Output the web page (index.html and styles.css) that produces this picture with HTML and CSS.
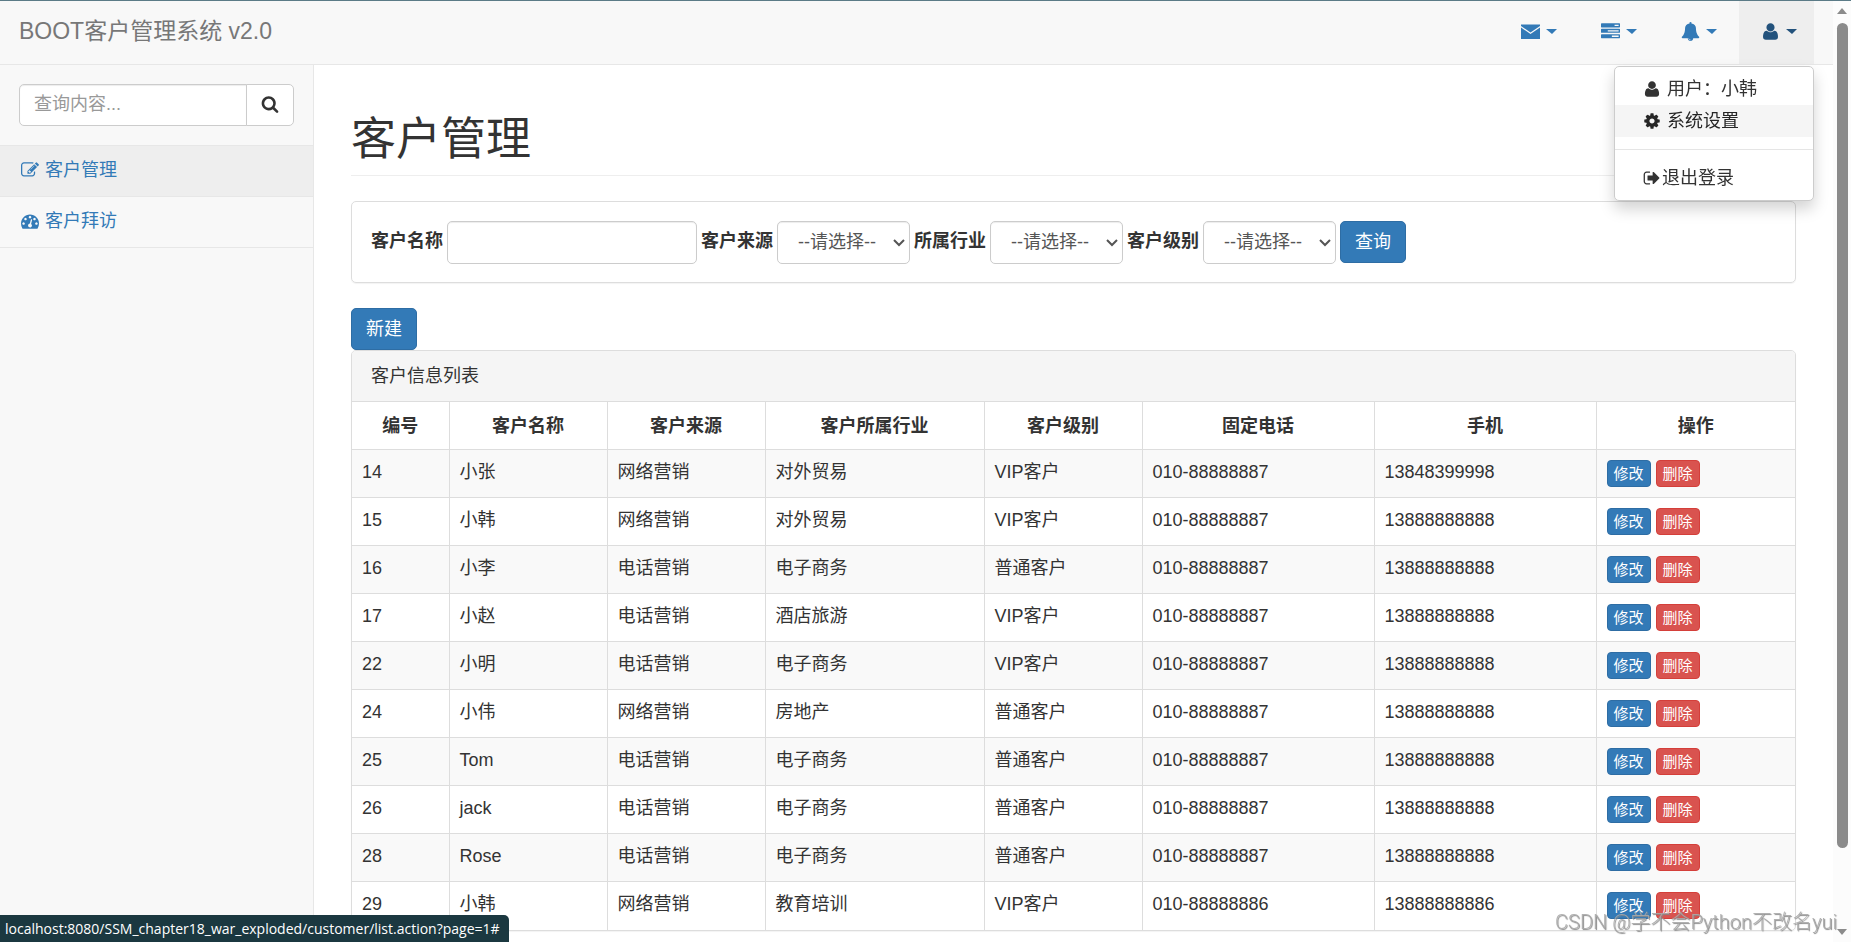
FILE: index.html
```
<!DOCTYPE html>
<html lang="zh-CN">
  <head>
    <title>客户管理-BootCRM</title>
    <meta charset="UTF-8">
    <meta name="viewport" content="width=device-width, initial-scale=1.0">
    <link rel="stylesheet" href="styles.css">
  </head>
  <body>
    <!-- icon sprites -->
    <svg class="sprites" aria-hidden="true">
      <symbol id="i-envelope" viewBox="0 0 19 16"><path d="M0 1h19v1.500L9.500 9 0 2.500zM0 4l9.500 6.500L19 4v11.500H0z"/></symbol>
      <symbol id="i-tasks" viewBox="0 0 1792 1792"><path d="M1024 1408h640v-128h-640v128zm-384-512h1024v-128h-1024v128zm640-512h384v-128h-384v128zm512 832v256q0 26-19 45t-45 19h-1664q-26 0-45-19t-19-45v-256q0-26 19-45t45-19h1664q26 0 45 19t19 45zm0-512v256q0 26-19 45t-45 19h-1664q-26 0-45-19t-19-45v-256q0-26 19-45t45-19h1664q26 0 45 19t19 45zm0-512v256q0 26-19 45t-45 19h-1664q-26 0-45-19t-19-45v-256q0-26 19-45t45-19h1664q26 0 45 19t19 45z"/></symbol>
      <symbol id="i-bell" viewBox="0 0 1792 1792"><path d="M912 1696q0-16-16-16-59 0-101.500-42.500t-42.500-101.500q0-16-16-16t-16 16q0 73 51.500 124.500t124.500 51.500q16 0 16-16zm816-288q0 52-38 90t-90 38h-448q0 106-75 181t-181 75-181-75-75-181h-448q-52 0-90-38t-38-90q50-42 91-88t85-119.500 74.500-158.500 50-206 19.500-260q0-152 117-282.500t307-158.500q-8-19-8-39 0-40 28-68t68-28 68 28 28 68q0 20-8 39 190 28 307 158.500t117 282.500q0 139 19.500 260t50 206 74.500 158.500 85 119.500 91 88z"/></symbol>
      <symbol id="i-user" viewBox="0 0 1792 1792"><path d="M1600 1405q0 120-73 189.500t-194 69.500h-874q-121 0-194-69.500t-73-189.500q0-53 3.500-103.500t14-109 26.500-108.500 43-97.500 62-81 85.500-53.500 111.500-20q9 0 42 21.500t74.500 48 108 48 133.500 21.500 133.500-21.500 108-48 74.500-48 42-21.500q61 0 111.500 20t85.500 53.500 62 81 43 97.500 26.500 108.500 14 109 3.500 103.500zm-320-893q0 159-112.500 271.500t-271.500 112.500-271.500-112.500-112.500-271.500 112.500-271.500 271.500-112.500 271.500 112.500 112.500 271.500z"/></symbol>
      <symbol id="i-gear" viewBox="0 0 1792 1792"><path d="M1152 896q0-106-75-181t-181-75-181 75-75 181 75 181 181 75 181-75 75-181zm512-109v222q0 12-8 23t-20 13l-185 28q-19 54-39 91 35 50 107 138 10 12 10 25t-9 23q-27 37-99 108t-94 71q-12 0-26-9l-138-108q-44 23-91 38-16 136-29 186-7 28-36 28h-222q-14 0-24.500-8.500t-11.500-21.500l-28-184q-49-16-90-37l-141 107q-10 9-25 9-14 0-25-11-126-114-165-168-7-10-7-23 0-12 8-23 15-21 51-66.500t54-70.500q-27-50-41-99l-183-27q-13-2-21-12.500t-8-23.500v-222q0-12 8-23t19-13l186-28q14-46 39-92-40-57-107-138-10-12-10-24 0-10 9-23 26-36 98.500-107.500t94.500-71.500q13 0 26 10l138 107q44-23 91-38 16-136 29-186 7-28 36-28h222q14 0 24.500 8.500t11.500 21.500l28 184q49 16 90 37l142-107q9-9 24-9 13 0 25 10 129 119 165 170 7 8 7 22 0 12-8 23-15 21-51 66.500t-54 70.500q26 50 41 98l183 28q13 2 21 12.500t8 23.500z"/></symbol>
      <symbol id="i-signout" viewBox="0 0 1792 1792"><path d="M704 1440q0 4 1 20t.5 26.500-3 23.500-10 19.500-20.500 6.500h-320q-119 0-203.500-84.500t-84.500-203.500v-704q0-119 84.500-203.500t203.500-84.500h320q13 0 22.500 9.500t9.500 22.500q0 4 1 20t.5 26.500-3 23.500-10 19.500-20.500 6.500h-320q-66 0-113 47t-47 113v704q0 66 47 113t113 47h312l11.500 1 11.500 3 8 5.500 7 9 2 13.500zm928-544q0 26-19 45l-544 544q-19 19-45 19t-45-19-19-45v-288h-448q-26 0-45-19t-19-45v-384q0-26 19-45t45-19h448v-288q0-26 19-45t45-19 45 19l544 544q19 19 19 45z"/></symbol>
      <symbol id="i-search" viewBox="0 0 1792 1792"><path d="M1216 832q0-185-131.500-316.500t-316.500-131.500-316.500 131.500-131.500 316.500 131.500 316.500 316.500 131.500 316.500-131.500 131.500-316.500zm512 832q0 52-38 90t-90 38q-54 0-90-38l-343-342q-179 124-399 124-143 0-273.500-55.500t-225-150-150-225-55.500-273.500 55.500-273.500 150-225 225-150 273.500-55.500 273.500 55.500 225 150 150 225 55.500 273.500q0 220-124 399l343 343q37 37 37 90z"/></symbol>
      <symbol id="i-edit" viewBox="0 0 1792 1792"><path d="M888 1184l116-116-152-152-116 116v56h96v96h56zm440-720q-16-16-33 1l-350 350q-17 17-1 33t33-1l350-350q17-17 1-33zm80 594v190q0 119-84.500 203.500t-203.500 84.500h-832q-119 0-203.500-84.500t-84.500-203.500v-832q0-119 84.500-203.500t203.500-84.500h832q63 0 117 25 15 7 18 23 3 17-9 29l-49 49q-14 14-32 8-23-6-45-6h-832q-66 0-113 47t-47 113v832q0 66 47 113t113 47h832q66 0 113-47t47-113v-126q0-13 9-22l64-64q15-15 35-7t20 29zm-96-738l288 288-672 672h-288v-288zm444 132l-92 92-288-288 92-92q28-28 68-28t68 28l152 152q28 28 28 68t-28 68z"/></symbol>
      <symbol id="i-dashboard" viewBox="0 0 1792 1792"><path d="M384 1152q0-53-37.500-90.500t-90.500-37.500-90.500 37.500-37.500 90.500 37.500 90.500 90.500 37.500 90.500-37.500 37.500-90.500zm192-448q0-53-37.500-90.500t-90.500-37.500-90.500 37.500-37.500 90.500 37.500 90.500 90.500 37.500 90.500-37.500 37.500-90.500zm428 481l101-382q6-26-7.500-48.500t-38.500-29.500-48 6.500-30 39.500l-101 382q-60 5-107 43.500t-63 98.500q-20 77 20 146t117 89 146-20 89-117q16-60-6-117t-72-91zm660-33q0-53-37.500-90.500t-90.500-37.500-90.500 37.500-37.500 90.500 37.500 90.500 90.500 37.500 90.500-37.500 37.500-90.500zm-640-640q0-53-37.500-90.500t-90.500-37.500-90.500 37.500-37.500 90.500 37.500 90.500 90.500 37.500 90.500-37.500 37.500-90.500zm448 192q0-53-37.500-90.500t-90.500-37.500-90.500 37.500-37.500 90.500 37.500 90.500 90.500 37.500 90.500-37.500 37.500-90.500zm320 448q0 261-141 483-19 29-54 29h-1402q-35 0-54-29-141-221-141-483 0-182 71-348t191-286 286-191 348-71 348 71 286 191 191 286 71 348z"/></symbol>
      <symbol id="i-chevron" viewBox="0 0 12 8"><path d="M1 1l5 5 5-5" fill="none" stroke="currentColor" stroke-width="2"/></symbol>
    </svg>

    <div class="wrapper">
      <!-- top nav -->
      <nav class="navbar">
        <a class="navbar-brand" href="#">BOOT客户管理系统 v2.0</a>
        <ul class="top-links">
          <li><a href="#" aria-label="邮件"><svg class="icon"><use href="#i-envelope"/></svg><i class="caret"></i></a></li>
          <li><a href="#" aria-label="任务"><svg class="icon"><use href="#i-tasks"/></svg><i class="caret"></i></a></li>
          <li><a href="#" aria-label="消息"><svg class="icon"><use href="#i-bell"/></svg><i class="caret"></i></a></li>
          <li class="open">
            <a href="#" aria-label="用户"><svg class="icon"><use href="#i-user"/></svg><i class="caret"></i></a>
            <ul class="dropdown-menu">
              <li><a href="#"><svg class="icon"><use href="#i-user"/></svg> 用户：小韩</a></li>
              <li><a class="hover" href="#"><svg class="icon"><use href="#i-gear"/></svg> 系统设置</a></li>
              <li class="divider"></li>
              <li><a class="tight" href="#"><svg class="icon"><use href="#i-signout"/></svg>退出登录</a></li>
            </ul>
          </li>
        </ul>
      </nav>

      <div class="content">
        <aside class="sidebar">
          <div class="sidebar-search">
            <input type="text" placeholder="查询内容..." aria-label="查询内容">
            <button type="button" aria-label="搜索"><svg class="icon"><use href="#i-search"/></svg></button>
          </div>
          <ul class="side-menu">
            <li><a class="active" href="#"><svg class="icon"><use href="#i-edit"/></svg>客户管理</a></li>
            <li><a href="#"><svg class="icon"><use href="#i-dashboard"/></svg>客户拜访</a></li>
          </ul>
        </aside>

        <main class="page">
          <h1 class="page-header">客户管理</h1>

          <form class="panel search-form">
            <label for="customerName">客户名称</label>
            <input type="text" id="customerName" name="custName">
            <label for="customerFrom">客户来源</label>
            <span class="select">
              <select id="customerFrom" name="custSource"><option>--请选择--</option></select>
              <svg><use href="#i-chevron"/></svg>
            </span>
            <label for="custIndustry">所属行业</label>
            <span class="select">
              <select id="custIndustry" name="custIndustry"><option>--请选择--</option></select>
              <svg><use href="#i-chevron"/></svg>
            </span>
            <label for="custLevel">客户级别</label>
            <span class="select">
              <select id="custLevel" name="custLevel"><option>--请选择--</option></select>
              <svg><use href="#i-chevron"/></svg>
            </span>
            <button type="button" class="btn btn-primary">查询</button>
          </form>

          <button type="button" class="btn btn-primary">新建</button>

          <div class="panel">
            <div class="panel-heading">客户信息列表</div>
            <table>
              <colgroup>
                <col class="col-id">
                <col class="col-name">
                <col class="col-name">
                <col class="col-industry">
                <col class="col-name">
                <col class="col-phone">
                <col class="col-mobile">
                <col>
              </colgroup>
              <thead>
                <tr>
                  <th>编号</th>
                  <th>客户名称</th>
                  <th>客户来源</th>
                  <th>客户所属行业</th>
                  <th>客户级别</th>
                  <th>固定电话</th>
                  <th>手机</th>
                  <th>操作</th>
                </tr>
              </thead>
              <tbody id="customer-rows"></tbody>
            </table>
          </div>
        </main>
      </div>
    </div>

    <div class="scrollbar" aria-hidden="true">
      <i class="arrow-up"></i>
      <i class="thumb"></i>
      <i class="arrow-down"></i>
    </div>
    <div class="status-bar">localhost:8080/SSM_chapter18_war_exploded/customer/list.action?page=1#</div>
    <div class="watermark">CSDN @学不会Python不改名yui</div>

    <script>
      const customers = [
        ["14", "小张", "网络营销", "对外贸易", "VIP客户", "010-88888887", "13848399998"],
        ["15", "小韩", "网络营销", "对外贸易", "VIP客户", "010-88888887", "13888888888"],
        ["16", "小李", "电话营销", "电子商务", "普通客户", "010-88888887", "13888888888"],
        ["17", "小赵", "电话营销", "酒店旅游", "VIP客户", "010-88888887", "13888888888"],
        ["22", "小明", "电话营销", "电子商务", "VIP客户", "010-88888887", "13888888888"],
        ["24", "小伟", "网络营销", "房地产", "普通客户", "010-88888887", "13888888888"],
        ["25", "Tom", "电话营销", "电子商务", "普通客户", "010-88888887", "13888888888"],
        ["26", "jack", "电话营销", "电子商务", "普通客户", "010-88888887", "13888888888"],
        ["28", "Rose", "电话营销", "电子商务", "普通客户", "010-88888887", "13888888888"],
        ["29", "小韩", "网络营销", "教育培训", "VIP客户", "010-88888886", "13888888886"]
      ];

      // Fill the customer table, one row each plus the edit / delete buttons
      const rows = document.getElementById("customer-rows");
      customers.forEach((customer) => {
        const row = rows.insertRow();
        customer.forEach((value) => {
          row.insertCell().textContent = value;
        });
        const actions = row.insertCell();
        actions.className = "actions";
        actions.innerHTML =
          '<div><button type="button" class="btn btn-primary btn-xs">修改</button>' +
          '<button type="button" class="btn btn-danger btn-xs">删除</button></div>';
      });
    </script>
  </body>
</html>
```
FILE: styles.css
```
* {
  box-sizing: border-box;
}

body {
  margin: 0;
  border-top: 1px solid #5b7b87;
  font-family: "Liberation Sans", Arial, "Noto Sans CJK SC", sans-serif;
  font-size: 18px;
  line-height: 25px;
  color: #333;
  background-color: #fff;
}

a {
  color: #337ab7;
  text-decoration: none;
}

ul {
  list-style: none;
  margin: 0;
  padding: 0;
}

input,
select,
button {
  font: inherit;
  color: inherit;
}

.sprites {
  position: absolute;
  width: 0;
  height: 0;
}

.icon {
  width: 18px;
  height: 18px;
  flex: none;
  fill: currentColor;
}

.wrapper {
  display: flex;
  flex-direction: column;
  min-height: calc(100vh - 1px);
  margin-right: 18px;
  background-color: #f8f8f8;
}

/* top nav */
.navbar {
  display: flex;
  justify-content: space-between;
  padding: 0 19px;
  border-bottom: 1px solid #e7e7e7;
}

.navbar-brand {
  padding: 18px 0 20px;
  font-size: 23px;
  color: #777;
}

.top-links {
  display: flex;
  gap: 5px;
}

.top-links > li {
  position: relative;
  display: flex;
}

.top-links > li > a {
  display: flex;
  align-items: center;
  gap: 6px;
  padding: 0 17px 2px 22px;
}

.top-links > li > a .icon {
  width: 19px;
  height: 19px;
}

.top-links > .open > a {
  color: #23527c;
  background-color: #eee;
}

.caret {
  border-top: 5px solid;
  border-left: 6px solid transparent;
  border-right: 5px solid transparent;
}

.dropdown-menu {
  position: absolute;
  top: 100%;
  right: 0;
  z-index: 10;
  width: 200px;
  margin-top: 2px;
  padding: 6px 0;
  border: 1px solid #ccc;
  border-radius: 5px;
  background-color: #fff;
  box-shadow: 0 8px 15px rgba(0, 0, 0, 0.175);
}

.dropdown-menu a {
  display: flex;
  align-items: center;
  gap: 6px;
  height: 32px;
  padding: 0 28px;
  color: #333;
}

.dropdown-menu .tight {
  gap: 1px;
}

.dropdown-menu .hover {
  color: #262626;
  background-color: #f5f5f5;
}

.dropdown-menu .divider {
  height: 1px;
  margin: 12px 0;
  background-color: #e5e5e5;
}

.content {
  display: flex;
  flex: 1;
}

/* sidebar */
.sidebar {
  width: 313px;
  flex: none;
}

.sidebar-search {
  display: flex;
  padding: 19px;
  border-bottom: 1px solid #e7e7e7;
}

.sidebar-search input {
  flex: 1;
  min-width: 0;
  height: 42px;
  padding: 0 14px 2px;
  border: 1px solid #ccc;
  border-radius: 5px 0 0 5px;
  box-shadow: inset 0 1px 1px rgba(0, 0, 0, 0.075);
}

.sidebar-search input::placeholder {
  color: #999;
}

.sidebar-search button {
  display: flex;
  align-items: center;
  justify-content: center;
  width: 48px;
  margin-left: -1px;
  padding: 0 0 2px;
  border: 1px solid #ccc;
  border-radius: 0 5px 5px 0;
  background-color: #fff;
}

.side-menu a {
  display: flex;
  align-items: center;
  gap: 6px;
  height: 51px;
  padding: 0 21px 2px;
  border-bottom: 1px solid #e7e7e7;
}

.side-menu .active {
  background-color: #eee;
}

/* page */
.page {
  flex: 1;
  min-width: 0;
  padding: 0 37px 11px;
  border-left: 1px solid #e7e7e7;
  background-color: #fff;
}

.page-header {
  margin: 50px 0 25px;
  padding-bottom: 10px;
  border-bottom: 1px solid #eee;
  font-size: 45px;
  font-weight: 400;
  line-height: 50px;
}

.panel {
  border: 1px solid #ddd;
  border-radius: 5px;
  box-shadow: 0 1px 1px rgba(0, 0, 0, 0.05);
}

.search-form {
  display: flex;
  align-items: flex-start;
  gap: 4px;
  margin-bottom: 25px;
  padding: 19px 19px 18px;
}

.search-form label {
  padding-top: 8px;
  font-weight: bold;
}

.search-form input,
.search-form select {
  height: 43px;
  border: 1px solid #ccc;
  border-radius: 5px;
  background-color: #fff;
  box-shadow: inset 0 1px 1px rgba(0, 0, 0, 0.075);
  color: #555;
}

.search-form input {
  width: 250px;
  padding: 0 15px;
}

.select {
  position: relative;
}

.select select {
  display: block;
  width: 133px;
  padding: 0 20px;
  appearance: none;
}

.select svg {
  position: absolute;
  top: 18px;
  right: 5px;
  width: 12px;
  height: 8px;
  color: #555;
  pointer-events: none;
}

.btn {
  display: block;
  height: 42px;
  padding: 0 14px;
  border: 1px solid;
  border-radius: 5px;
  color: #fff;
}

.btn-primary {
  border-color: #2e6da4;
  background-color: #337ab7;
}

.btn-danger {
  border-color: #d43f3a;
  background-color: #d9534f;
}

.btn-xs {
  height: 27px;
  padding: 0 6px;
  border-radius: 4px;
  font-size: 15px;
  line-height: 22px;
}

.panel-heading {
  padding: 13px 19px 12px;
  border-radius: 4px 4px 0 0;
  background-color: #f5f5f5;
}

/* customer table */
table {
  width: 100%;
  border-collapse: collapse;
  table-layout: fixed;
}

.col-id {
  width: 97px;
}

.col-name {
  width: 158px;
}

.col-industry {
  width: 219px;
}

.col-phone {
  width: 232px;
}

.col-mobile {
  width: 222px;
}

th,
td {
  height: 48px;
  padding: 0 10px;
  border: 1px solid #ddd;
  border-bottom: none;
}

th:first-child,
td:first-child {
  border-left: none;
}

th:last-child,
td:last-child {
  border-right: none;
}

th {
  padding-top: 2px;
}

td {
  padding-bottom: 3px;
}

td.actions {
  padding-bottom: 0;
}

.actions div {
  display: flex;
  gap: 5px;
}

tbody tr:nth-child(odd) {
  background-color: #f9f9f9;
}

/* window scrollbar */
.scrollbar {
  position: fixed;
  top: 1px;
  right: 0;
  bottom: 0;
  display: flex;
  flex-direction: column;
  align-items: center;
  width: 18px;
  padding: 7px 0;
  background-color: #fcfcfc;
}

.arrow-up,
.arrow-down {
  border: 5px solid transparent;
}

.arrow-up {
  border-top: none;
  border-bottom: 6px solid #8b8b8b;
}

.arrow-down {
  margin-top: auto;
  border-bottom: none;
  border-top: 6px solid #8b8b8b;
}

.thumb {
  width: 11px;
  height: 89%;
  margin-top: 9px;
  border-radius: 6px;
  background-color: #8b8b8b;
}

.status-bar {
  position: fixed;
  left: 0;
  bottom: 0;
  padding: 1px 9px 1px 5px;
  border-radius: 0 5px 0 0;
  background-color: #1b3840;
  color: #fff;
  font-family: "Open Sans", "Noto Sans", sans-serif;
  font-size: 14px;
}

.watermark {
  position: fixed;
  right: 14px;
  bottom: 7px;
  color: rgba(170, 170, 170, 0.9);
  font-family: Roboto, "Noto Sans CJK SC", sans-serif;
  font-size: 20px;
  font-weight: 300;
  text-shadow: 1px 1px 1px #888;
}
```
